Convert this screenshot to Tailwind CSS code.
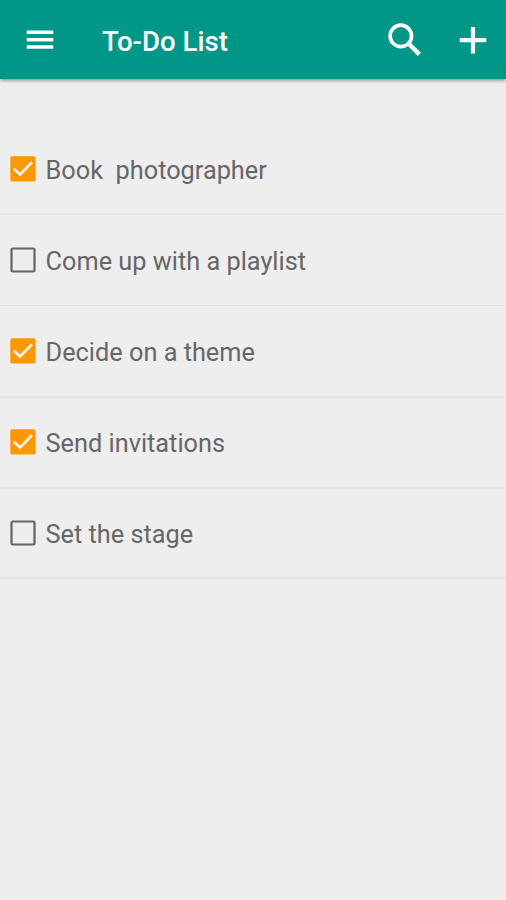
<!DOCTYPE html>
<html lang="en">
<head>
<meta charset="utf-8">
<title>To-Do List</title>
<script src="https://cdn.jsdelivr.net/npm/@tailwindcss/browser@4"></script>
</head>
<body class="h-[900px] w-[506px] overflow-hidden bg-[#eeeeee] font-['Roboto',sans-serif] text-[#666666]">
<svg class="hidden">
  <symbol id="checked" viewBox="0 0 26 26"><rect x="0.3" y="0.3" width="25.3" height="25.3" rx="1.6" fill="#ff9800"/><path d="M4 12.7l6 5.9L22 6.300" fill="none" stroke="#f6f1e8" stroke-width="2.8"/></symbol>
  <symbol id="unchecked" viewBox="0 0 26 26"><rect x="1.5" y="1.500" width="23" height="23" rx="1.4" fill="none" stroke="#646464" stroke-width="2.2"/></symbol>
</svg>
<header class="flex h-[79px] items-center bg-[#009788] text-white shadow-[0_1px_4px_rgba(0,0,0,0.5)]">
  <button class="ml-[26px] w-7" aria-label="Menu">
    <svg class="h-5 w-7" viewBox="0 0 28 20" fill="currentColor"><path d="M.7.5h26.600v3.5H.7zM.7 7.900h26.600v3.5H.7zM.7 15.300h26.600v3.500H.7z"/></svg>
  </button>
  <h1 class="ml-12 flex-1 whitespace-nowrap pt-1 text-[27.6px] font-medium">To-Do List</h1>
  <button class="mr-9" aria-label="Search">
    <svg class="h-9 w-9" viewBox="0 0 36 36" fill="none" stroke="currentColor"><circle cx="13.8" cy="13.9" r="10.7" stroke-width="3.7"/><path d="M21.3 21.3l11.1 11.1" stroke-width="4.4"/></svg>
  </button>
  <button class="mr-[19px]" aria-label="Add">
    <svg class="h-7 w-7" viewBox="0 0 28 28" fill="currentColor"><path d="M11.900 1h4.200v11.100h11.200v4.200H16.100v11.100h-4.200V16.300H.7v-4.200h11.200z"/></svg>
  </button>
</header>
<main class="pt-[45px] text-[25.3px] leading-[29px]">
  <ul>
    <li class="flex h-[91px] items-start border-b-2 border-[#e4e4e4] pl-[10px] pt-8"><svg class="mr-[9.6px] size-[26px]"><use href="#checked"/></svg><span class="whitespace-pre">Book  photographer</span></li>
    <li class="flex h-[91px] items-start border-b border-[#dddddd] pl-[10px] pt-8"><svg class="mr-[9.6px] size-[26px]"><use href="#unchecked"/></svg><span>Come up with a playlist</span></li>
    <li class="flex h-[92px] items-start border-b-2 border-[#e2e2e2] pl-[10px] pt-8"><svg class="mr-[9.6px] size-[26px]"><use href="#checked"/></svg><span>Decide on a theme</span></li>
    <li class="flex h-[91px] items-start border-b-2 border-[#e4e4e4] pl-[10px] pt-[31px]"><svg class="mr-[9.6px] size-[26px]"><use href="#checked"/></svg><span>Send invitations</span></li>
    <li class="flex h-[90px] items-start border-b-2 border-[#e2e2e2] pl-[10px] pt-[31px]"><svg class="mr-[9.6px] size-[26px]"><use href="#unchecked"/></svg><span>Set the stage</span></li>
  </ul>
</main>
</body>
</html>
